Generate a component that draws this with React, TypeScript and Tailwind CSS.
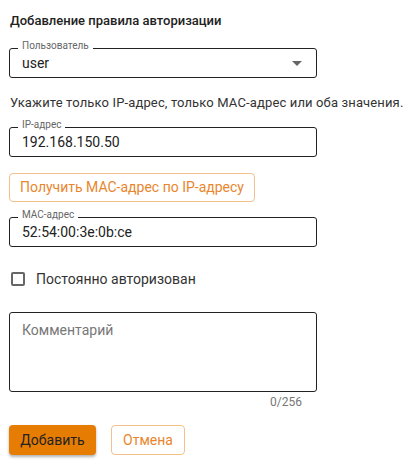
import React from "react";

function Field({ label, value, select }: { label: string; value: string; select?: boolean }) {
  return (
    <div className="relative flex h-[30px] w-[308px] items-center rounded-[3px] border border-[#222] pl-[12px] pr-[12px]">
      <span className="absolute left-[8px] top-[-9px] bg-white px-[4px] text-[10px] leading-[12px] text-[#666]">{label}</span>
      <span className="flex-1 text-[14px] leading-[16px] text-[#222]">{value}</span>
      {select && (
        <svg width="10" height="5" viewBox="0 0 10 5" className="mr-[2px]">
          <path d="M0 0 L10 0 L5 5 Z" fill="#666" />
        </svg>
      )}
    </div>
  );
}

export default function App() {
  return (
    <div className="flex h-[472px] w-[412px] flex-col bg-white pl-[9px] pt-[13px] font-['Roboto',sans-serif]">
      <div className="pl-[1px] text-[13px] font-medium leading-[15px] text-[#222]">Добавление правила авторизации</div>
      <div className="mt-[20px]">
        <Field label="Пользователь" value="user" select />
      </div>
      <div className="mt-[17px] pl-[1px] text-[13px] leading-[15px] tracking-[0.14px] text-[#333]">
        Укажите только IP-адрес, только MAC-адрес или оба значения.
      </div>
      <div className="mt-[17px]">
        <Field label="IP-адрес" value="192.168.150.50" />
      </div>
      <div className="mt-[16px]">
        <button className="flex h-[29px] w-[246px] items-center justify-center rounded-[4px] border border-[#f4c08c] text-[14px] text-[#e9862d]">
          Получить MAC-адрес по IP-адресу
        </button>
      </div>
      <div className="mt-[15px]">
        <Field label="MAC-адрес" value="52:54:00:3e:0b:ce" />
      </div>
      <div className="mt-[24px] flex items-center pl-[2px]">
        <span className="h-[14px] w-[14px] rounded-[2px] border-2 border-[#666]" />
        <span className="ml-[11px] text-[14px] leading-[16px] text-[#333]">Постоянно авторизован</span>
      </div>
      <div className="mt-[25px] h-[80px] w-[308px] rounded-[3px] border border-[#222] pl-[12px] pt-[5px]">
        <span className="text-[14px] leading-[16px] text-[#777]">Комментарий</span>
      </div>
      <div className="mt-[3px] w-[293px] text-right text-[12px] leading-[14px] text-[#777]">0/256</div>
      <div className="mt-[16px] flex gap-[15px]">
        <button className="h-[30px] w-[87px] rounded-[4px] bg-[#e67c02] text-[14px] text-[#222] shadow-[0_2px_3px_rgba(0,0,0,0.3)]">
          Добавить
        </button>
        <button className="h-[30px] w-[74px] rounded-[4px] border border-[#f4c08c] text-[14px] text-[#e9862d]">
          Отмена
        </button>
      </div>
    </div>
  );
}
